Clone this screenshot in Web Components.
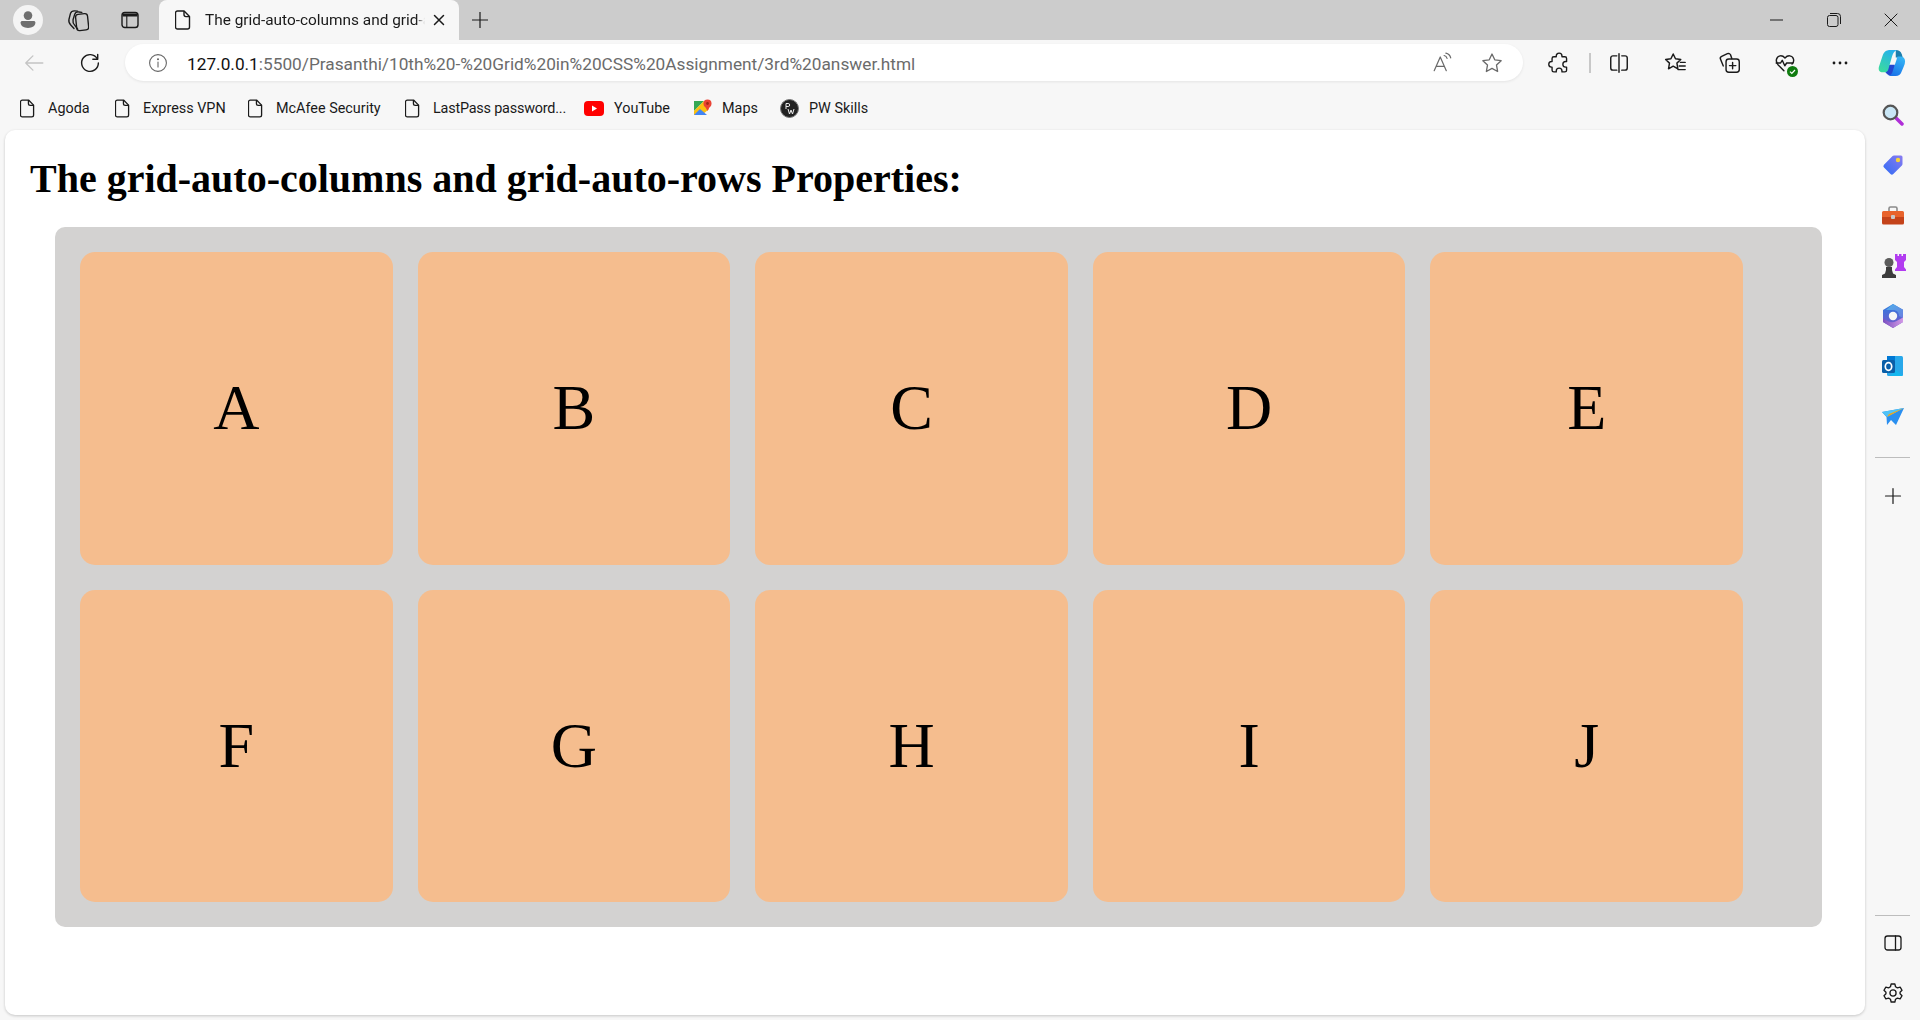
<!DOCTYPE html>
<html lang="en">
<head>
<meta charset="utf-8">
<title>The grid-auto-columns and grid-auto-rows Properties</title>
<style>
  html, body { margin: 0; height: 100%; background: #f7f7f7; overflow: hidden; }
  body { font-family: Roboto, "Liberation Sans", sans-serif; }
</style>
</head>
<body>
<browser-window>
  <browser-tabstrip slot="tabs" title-text="The grid-auto-columns and grid-auto-rows Properties"></browser-tabstrip>
  <browser-toolbar slot="toolbar"></browser-toolbar>
  <bookmark-bar slot="bookmarks"></bookmark-bar>
  <side-rail slot="rail"></side-rail>
  <page-card>
    <h1 style="font:bold 40px/46px 'Liberation Serif',serif;margin:0 0 0 25px;padding-top:16px;color:#000">The grid-auto-columns and grid-auto-rows Properties:</h1>
    <grid-demo>
      <grid-cell>A</grid-cell>
      <grid-cell>B</grid-cell>
      <grid-cell>C</grid-cell>
      <grid-cell>D</grid-cell>
      <grid-cell>E</grid-cell>
      <grid-cell>F</grid-cell>
      <grid-cell>G</grid-cell>
      <grid-cell>H</grid-cell>
      <grid-cell>I</grid-cell>
      <grid-cell>J</grid-cell>
    </grid-demo>
  </page-card>
</browser-window>

<script>
const stroke = (inner, size = 20, sw = 1.4) =>
  `<svg width="${size}" height="${size}" viewBox="0 0 20 20" fill="none" stroke="currentColor" stroke-width="${sw}" stroke-linecap="round" stroke-linejoin="round">${inner}</svg>`

const docIcon = `<svg width="16" height="20" viewBox="0 0 16 20" fill="none" stroke="#1a1a1a" stroke-width="1.4" stroke-linejoin="round"><path d="M2.5 1h6.6L14.5 6.4V17a2 2 0 0 1-2 2h-10a2 2 0 0 1-2-2V3a2 2 0 0 1 2-2z"/><path d="M9 1v3.6a2 2 0 0 0 2 2h3.5"/></svg>`

class BrowserWindow extends HTMLElement {
  constructor() {
    super()
    this.attachShadow({ mode: 'open' })
    this.shadowRoot.innerHTML = `
    <style>
      :host { display: flex; flex-direction: column; height: 1020px; width: 1920px; }
      .body { flex: 1; display: flex; min-height: 0; }
      .left { flex: 1; display: flex; flex-direction: column; min-width: 0; }
    </style>
    <slot name="tabs"></slot>
    <slot name="toolbar"></slot>
    <div class="body">
      <div class="left">
        <slot name="bookmarks"></slot>
        <slot></slot>
      </div>
      <slot name="rail"></slot>
    </div>`
  }
}

class BrowserTabstrip extends HTMLElement {
  constructor() {
    super()
    this.attachShadow({ mode: 'open' })
    this.shadowRoot.innerHTML = `
    <style>
      :host { display: flex; align-items: center; height: 40px; background: #cccccc; color: #1a1a1a; flex: none; }
      .avatar { width: 30px; height: 30px; border-radius: 50%; background: #f4f4f4; margin-left: 13px; display: flex; align-items: center; justify-content: center; }
      .btn { display: flex; align-items: center; justify-content: center; width: 24px; height: 24px; }
      .tab { width: 300px; height: 40px; margin-left: 17px; box-sizing: border-box; background: #f7f7f7; border-radius: 8px 8px 0 0; display: flex; align-items: center; padding: 0 14px 0 16px; }
      .title { width: 220px; margin-left: 14px; overflow: hidden; white-space: nowrap; font-size: 15.4px; color: #1a1a1a;
        -webkit-mask-image: linear-gradient(90deg, #000 96%, transparent); mask-image: linear-gradient(90deg, #000 96%, transparent); }
      .close { margin-left: auto; display: flex; }
      .plus { margin-left: 9px; }
      .win { margin-left: auto; display: flex; padding-right: 17px; gap: 33px; }
    </style>
    <div class="avatar"><svg width="20" height="20" viewBox="0 0 20 20" fill="#6f6f6f"><circle cx="10" cy="5.6" r="4.3"/><path d="M2.6 12.6c0-.9.8-1.6 1.7-1.6h11.4c.9 0 1.7.7 1.7 1.6 0 3.4-3 5.4-7.4 5.4s-7.4-2-7.4-5.4z"/></svg></div>
    <div class="btn" style="margin-left:22px">${stroke('<rect x="9.3" y="5" width="10" height="13.6" rx="2.4" transform="rotate(-6 14 12)"/><path d="M10.5 2.6L8 2.4C6 2.300 5.100 3 4.500 4.700L3.300 9.500C2.900 11.500 3.400 12.800 4.800 14.200L7.500 17"/><path d="M14 3.700L11.500 3.300C9.500 3.100 8.500 3.900 8 5.500L6.700 9.800C6.300 11.700 6.900 13.100 8.200 14.500L10.500 17.500"/>', 24, 1.150)}</div>
    <div class="btn" style="margin-left:29px"><svg width="20" height="20" viewBox="0 0 20 20" fill="none" stroke="#1a1a1a" stroke-width="1.400"><rect x="2" y="2.500" width="16" height="15" rx="2.800"/><path d="M2.500 3.500h15V6.500h-15z" fill="#1a1a1a" stroke="none"/><path d="M6.800 6v11.500" stroke-width="1.100"/></svg></div>
    <div class="tab">
      ${docIcon}
      <div class="title">${this.getAttribute('title-text')}</div>
      <div class="close"><svg width="12" height="12" viewBox="0 0 12 12" stroke="#1a1a1a" stroke-width="1.5" stroke-linecap="round"><path d="M1.5 1.5l9 9M10.5 1.5l-9 9"/></svg></div>
    </div>
    <div class="btn plus"><svg width="18" height="18" viewBox="0 0 18 18" stroke="#1a1a1a" stroke-width="1.2"><path d="M9 1v16M1 9h16"/></svg></div>
    <div class="win">
      <div class="btn"><svg width="14" height="14" viewBox="0 0 14 14" stroke="#1a1a1a" stroke-width="1"><path d="M0 7h13"/></svg></div>
      <div class="btn"><svg width="14" height="14" viewBox="0 0 14 14" fill="none" stroke="#1a1a1a" stroke-width="1"><rect x=".5" y="2.5" width="10.5" height="11" rx="2"/><path d="M3 .5h7.5a3 3 0 0 1 3 3V11"/></svg></div>
      <div class="btn"><svg width="14" height="14" viewBox="0 0 14 14" stroke="#1a1a1a" stroke-width="1"><path d="M.7.7l12.6 12.6M13.3.7L.7 13.3"/></svg></div>
    </div>`
  }
}

class BrowserToolbar extends HTMLElement {
  constructor() {
    super()
    this.attachShadow({ mode: 'open' })
    this.shadowRoot.innerHTML = `
    <style>
      :host { display: flex; align-items: center; height: 45px; background: #f7f7f7; color: #1a1a1a; flex: none; }
      .btn { display: flex; align-items: center; justify-content: center; width: 28px; height: 28px; flex: none; }
      .back { color: #c4c4c4; margin-left: 20px; }
      .reload { margin-left: 28px; }
      .address { width: 1398px; height: 37px; margin-left: 21px; box-sizing: border-box; background: #fff; border-radius: 19px; display: flex; align-items: center; padding: 0 17px 0 21px; box-shadow: 0 1px 3px rgba(0,0,0,.08); flex: none; }
      .url { margin-left: 17px; padding-top: 2px; font-size: 17.25px; white-space: nowrap; color: #6b6b6b; flex: 1; }
      .url b { font-weight: 400; color: #111; }
      .tools { display: flex; align-items: center; margin-left: 22px; }
      .sep { width: 1.5px; height: 20px; background: #c8c8c8; margin: 0 14px 0 16px; }
    </style>
    <div class="btn back">${stroke('<path d="M18 10H2.5M9 3.5L2.5 10 9 16.5"/>', 22, 1.2)}</div>
    <div class="btn reload">${stroke('<path d="M16.6 6.2A7.6 7.6 0 1 0 17.6 10"/><path d="M17 2.2v4.4h-4.4"/>', 22, 1.3)}</div>
    <div class="address">
      <div class="btn" style="width:24px;color:#666">${stroke('<circle cx="10" cy="10" r="8.4"/><path d="M10 9v5"/><circle cx="10" cy="6.2" r=".5"/>', 20, 1.1)}</div>
      <div class="url"><b>127.0.0.1</b>:5500/Prasanthi/10th%20-%20Grid%20in%20CSS%20Assignment/3rd%20answer.html</div>
      <div class="btn" style="color:#6a6a6a">${stroke('<path d="M2 17L7.5 4.5 13 17M4 13h7"/><path d="M11 3.2c1.3.3 2.3 1.3 2.7 2.6M12.6 1c2.2.5 3.9 2.2 4.4 4.4"/>', 22, 1.1)}</div>
      <div class="btn" style="margin-left:21px;color:#6a6a6a">${stroke('<path d="M10 1.8l2.5 5.3 5.8.8-4.2 4 1 5.8-5.1-2.8-5.1 2.8 1-5.8-4.2-4 5.8-.8z"/>', 22, 1.2)}</div>
    </div>
    <div class="tools">
      <div class="btn">${stroke('<path d="M7.500 4.300V3.600a2.600 2.600 0 0 1 5.200 0v.7h2.600c.9 0 1.600.7 1.600 1.600v2.700h-.8a2.600 2.600 0 0 0 0 5.200h.8v2.700c0 .9-.7 1.600-1.600 1.600h-2.600v-.8a2.600 2.600 0 0 0-5.200 0v.8H5.300c-.9 0-1.600-.7-1.600-1.600v-2.700h-.4a2.600 2.600 0 0 1 0-5.200h.4V5.900c0-.9.7-1.600 1.600-1.600z"/>', 22, 1.250)}</div>
      <div class="sep"></div>
      <div class="btn">${stroke('<path d="M8 3.500H4.500a2 2 0 0 0-2 2v9a2 2 0 0 0 2 2H8M12.500 3.500h3a2 2 0 0 1 2 2v9a2 2 0 0 1-2 2h-3M10 1.500v17"/>', 22, 1.3)}</div>
      <div class="btn" style="margin-left:28px">${stroke('<path d="M8.500 2.500l1.900 4 4.400.6-3.200 3 .8 4.700-3.900-2.200-3.900 2.200.8-4.700-3.200-3 4.400-.6z"/><path d="M14.500 9.500h4M13.500 12.500h5M12.500 15.500h6"/>', 24, 1.200)}</div>
      <div class="btn" style="margin-left:27px">${stroke('<rect x="7" y="7" width="11.500" height="11.500" rx="2.400"/><path d="M12.700 10v5.500M10 12.700h5.500"/><path d="M4.600 13L2.200 7.200a2 2 0 0 1 1-2.600l5-2.300a2 2 0 0 1 2.700 1L12 6.500"/>', 23, 1.250)}</div>
      <div class="btn" style="margin-left:27px;position:relative">${stroke('<path d="M9 17L3.600 11.500C1 8.500 2 4 5.600 3.500c1.800-.2 3.200.6 4.400 2 1.200-1.400 2.600-2.200 4.400-2 3.600.5 4.600 5 2 7.500"/><path d="M2 10h4l1.500-2.500 2.300 5 1.700-2.500H17"/>', 22, 1.3)}
        <svg style="position:absolute;right:1px;bottom:0" width="11" height="11" viewBox="0 0 11 11"><circle cx="5.5" cy="5.5" r="5.5" fill="#107c10"/><path d="M3 5.700l1.800 1.800L8 4" fill="none" stroke="#fff" stroke-width="1.2"/></svg></div>
      <div class="btn" style="margin-left:27px"><svg width="16" height="4" viewBox="0 0 16 4" fill="#1a1a1a"><circle cx="2" cy="2" r="1.4"/><circle cx="8" cy="2" r="1.4"/><circle cx="14" cy="2" r="1.4"/></svg></div>
      <div class="btn" style="margin-left:24px"><svg width="30" height="28" viewBox="0 0 30 28">
        <defs>
          <linearGradient id="cpl" x1="0.7" y1="0" x2="0.2" y2="1"><stop offset="0" stop-color="#25b0ee"/><stop offset="1" stop-color="#3bdc9c"/></linearGradient>
          <linearGradient id="cpr" x1="0.7" y1="0" x2="0.3" y2="1"><stop offset="0" stop-color="#35b6f5"/><stop offset="1" stop-color="#1a72e8"/></linearGradient>
        </defs>
        <path d="M18 16h-8l-2 8c2 3 5 4 8 4h3z" fill="#2447d0"/>
        <path d="M19 0c3 0 5.500 1.500 6.500 4.500L26.500 8H19z" fill="#1c7fae"/>
        <path d="M9 1c1-.8 2.500-1 4-1h7c-3 1.500-4 4-5 7l-4 14c-.5 2-2 3-4 3H5c-3 0-5-2-4-6L5 6c.7-2.300 2-4 4-5z" fill="url(#cpl)"/>
        <path d="M21 7h3c3 0 5 2 5 5 0 2-.5 4-1.500 6L25 24c-.8 2.500-3 4-6 4h-8c3-.8 4.500-3.500 5-6l4-12c.3-1.500.5-2.300 1-3z" fill="url(#cpr)"/>
      </svg></div>
    </div>`
  }
}

class BookmarkBar extends HTMLElement {
  constructor() {
    super()
    this.attachShadow({ mode: 'open' })
    const tiny = docIcon.replace('width="16" height="20"', 'width="15" height="19"')
    const items = [
      ['Agoda', tiny, 13, 24, 43],
      ['Express VPN', tiny, 13, 24, 81],
      ['McAfee Security', tiny, 13, 22, 107],
      ['LastPass password...', tiny, 13, 20, 131],
      ['YouTube', `<svg width="20" height="15" viewBox="0 0 20 15"><rect width="20" height="15" rx="4" fill="#f00"/><path d="M8 4.500l5 3-5 3z" fill="#fff"/></svg>`, 10, 23, 57],
      ['Maps', `<svg width="18" height="18" viewBox="0 0 18 18"><path d="M0 2h10L0 12z" fill="#34a853"/><path d="M0 12L10 2l5 8-7 6H0z" fill="#fbbc04" opacity=".95"/><path d="M0 16l6-6 7 6z" fill="#4285f4"/><circle cx="13.500" cy="4.500" r="4" fill="#ea4335"/><path d="M10.500 6.500l3 5.500 3-5.500z" fill="#ea4335"/><circle cx="13.500" cy="4.500" r="1.400" fill="#a52714"/></svg>`, 10, 22, 36],
      ['PW Skills', `<svg width="19" height="19" viewBox="0 0 19 19"><circle cx="9.500" cy="9.500" r="9" fill="#222" stroke="#777" stroke-width="1"/><path d="M6 4.500v5.500M6 4.500h2.200a1.500 1.500 0 0 1 0 3H6M8 10l1.500 5 1.500-4 1.500 4 1.500-5" fill="none" stroke="#eee" stroke-width="1"/></svg>`, 10, 0, 59]
    ]
    this.shadowRoot.innerHTML = `
    <style>
      :host { display: flex; align-items: center; height: 45px; flex: none; padding-left: 20px; box-sizing: border-box; padding-top: 1px; }
      .item { display: flex; align-items: center; font-size: 14.4px; color: #1a1a1a; white-space: nowrap; }
      .item span { display: block; }
      .tight { letter-spacing: -.2px; }
    </style>
    ${items.map(([label, icon, gap, after, w]) => `<div class="item" style="gap:${gap}px;margin-right:${after}px">${icon}<span style="width:${w}px" class="${w === 131 ? 'tight' : ''}">${label}</span></div>`).join('')}`
  }
}

class SideRail extends HTMLElement {
  constructor() {
    super()
    this.attachShadow({ mode: 'open' })
    this.shadowRoot.innerHTML = `
    <style>
      :host { display: flex; flex-direction: column; align-items: center; width: 55px; flex: none; box-sizing: border-box; padding: 17px 0 14px; color: #1a1a1a; }
      .ico { width: 26px; height: 26px; display: flex; align-items: center; justify-content: center; margin-bottom: 24.300px; flex: none; }
      hr { width: 35px; border: 0; border-top: 1px solid #bdbdbd; margin: 0; flex: none; }
      .spacer { flex: 1; }
    </style>
    <div class="ico"><svg width="22" height="22" viewBox="0 0 22 22"><path d="M13 13l7 7" stroke="#b02fd8" stroke-width="3.500" stroke-linecap="round"/><circle cx="8.500" cy="8.500" r="6.800" fill="#c9e6f5" stroke="#555" stroke-width="2.200"/></svg></div>
    <div class="ico"><svg width="22" height="22" viewBox="0 0 22 22"><defs><linearGradient id="tg" x1="0" y1="1" x2="1" y2="0"><stop offset="0" stop-color="#2f6cf5"/><stop offset="1" stop-color="#8a7bf0"/></linearGradient></defs><path d="M12 1.500h7a1.500 1.500 0 0 1 1.500 1.500v7a2 2 0 0 1-.6 1.400L11.300 20a2 2 0 0 1-2.800 0L2 13.500a2 2 0 0 1 0-2.800L10.600 2a2 2 0 0 1 1.400-.5z" fill="url(#tg)"/><circle cx="16" cy="6" r="2.200" fill="#f6d33c"/></svg></div>
    <div class="ico"><svg width="24" height="22" viewBox="0 0 24 22"><path d="M8 6V3.500A1.500 1.500 0 0 1 9.500 2h5A1.500 1.500 0 0 1 16 3.500V6" fill="none" stroke="#8a8a8a" stroke-width="1.600"/><path d="M1 7.500A1.500 1.500 0 0 1 2.500 6h19A1.500 1.500 0 0 1 23 7.500V12H1z" fill="#e8632c"/><path d="M1 12h22v6a1.500 1.500 0 0 1-1.500 1.500h-19A1.500 1.500 0 0 1 1 18z" fill="#c4431a"/><rect x="10" y="10" width="4" height="4" rx="1" fill="#c9c9c9"/></svg></div>
    <div class="ico"><svg width="26" height="26" viewBox="0 0 26 26"><path d="M15 1h2.500v2H19V1h2.500v2H23V1h3v6l-2 2v5l2 2.500V18H15v-1.500l2-2.500V9l-2-2z" fill="#b23cf0"/><circle cx="9" cy="9.500" r="4.500" fill="#5c5c5c"/><path d="M6 14h6v3l1 3.500 3 1.500v3H2v-3l3-1.500 1-3.500z" fill="#3c3c3c"/></svg></div>
    <div class="ico"><svg width="24" height="26" viewBox="0 0 24 26">
      <defs>
        <linearGradient id="m3a" x1="0" y1="0" x2="0" y2="1"><stop offset="0" stop-color="#2b7de0"/><stop offset="1" stop-color="#7d54c8"/></linearGradient>
        <linearGradient id="m3b" x1="0" y1="0" x2="1" y2="1"><stop offset="0" stop-color="#4fb0ea"/><stop offset="1" stop-color="#6a7fe0"/></linearGradient>
        <linearGradient id="m3c" x1="0" y1="0" x2="1" y2="0"><stop offset="0" stop-color="#7a4fc0"/><stop offset="1" stop-color="#d49ae6"/></linearGradient>
      </defs>
      <path d="M12 1l10 5.800V19l-10 6-10-6V7z" fill="url(#m3a)"/>
      <path d="M12 1l10 5.800V15l-4-2c0-4-2.500-6-6-6H5z" fill="url(#m3b)"/>
      <path d="M2 15.500l5.500 3c2.500 1.300 5.500 1 8-.5l6.500-3.500V19l-10 6-10-6z" fill="url(#m3c)"/>
      <circle cx="12" cy="13" r="4.200" fill="#f7f7f7"/>
    </svg></div>
    <div class="ico"><svg width="24" height="22" viewBox="0 0 24 22"><rect x="6" y="1" width="16" height="20" rx="1.500" fill="#28a8ea"/><rect x="6" y="1" width="8" height="7" fill="#0078d4"/><path d="M9 21h13l-7-6z" fill="#14b7ef"/><rect x="1" y="5" width="13" height="13" rx="1.500" fill="#0a5fa8"/><ellipse cx="7.500" cy="11.500" rx="3.200" ry="3.800" fill="none" stroke="#fff" stroke-width="1.700"/></svg></div>
    <div class="ico" style="margin-bottom:27px"><svg width="24" height="20" viewBox="0 0 24 20"><path d="M1 5l22-4-8 17-5-5-4 5-.5-8z" fill="#2a8ff0"/><path d="M1 5l22-4L6 10z" fill="#4fc3f7"/><path d="M6 10L23 1 8 7z" fill="#f2a516"/></svg></div>
    <hr>
    <div class="ico" style="margin:25px 0 0">${stroke('<path d="M10 2.500v15M2.500 10h15"/>', 20, 1.200)}</div>
    <div class="spacer"></div>
    <hr>
    <div class="ico" style="margin:14px 0 24px">${stroke('<rect x="2" y="3" width="16" height="14" rx="2.500"/><path d="M12.500 3v14"/>', 20, 1.300)}</div>
    <div class="ico" style="margin:0">${stroke('<circle cx="10" cy="10" r="2.800"/><path d="M8.300 1.800h3.400l.6 2.500 1.700 1 2.500-.7 1.700 2.900-1.800 1.800v1.400l1.800 1.800-1.700 2.900-2.500-.7-1.700 1-.6 2.500H8.300l-.6-2.500-1.700-1-2.500.7-1.700-2.900 1.800-1.800V9.300L1.800 7.500l1.700-2.900 2.500.7 1.700-1z"/>', 22, 1.200)}</div>`
  }
}

class PageCard extends HTMLElement {
  constructor() {
    super()
    this.attachShadow({ mode: 'open' })
    this.shadowRoot.innerHTML = `
    <style>
      :host { display: block; flex: 1; min-height: 0; margin: 0 0 5px 5px; background: #fff; border-radius: 10px; box-shadow: 0 1px 3px rgba(0,0,0,.2); box-sizing: border-box; overflow: hidden; }
      .inner { padding-top: 10px; }
    </style>
    <div class="inner"><slot></slot></div>`
  }
}

class GridDemo extends HTMLElement {
  constructor() {
    super()
    this.attachShadow({ mode: 'open' })
    this.shadowRoot.innerHTML = `
    <style>
      :host { display: grid; grid-template-columns: repeat(5, 312.6px); grid-auto-rows: 312.5px; gap: 25px; padding: 25px; width: 1767px; margin: 25px 0 0 50px; box-sizing: border-box; background: #d3d2d1; border-radius: 10px; }
    </style>
    <slot></slot>`
  }
}

class GridCell extends HTMLElement {
  constructor() {
    super()
    this.attachShadow({ mode: 'open' })
    this.shadowRoot.innerHTML = `
    <style>
      :host { display: flex; align-items: center; justify-content: center; background: #f5bd8e; border-radius: 15px; font: 64px "Liberation Serif", serif; color: #000; }
    </style>
    <slot></slot>`
  }
}

customElements.define('browser-window', BrowserWindow)
customElements.define('browser-tabstrip', BrowserTabstrip)
customElements.define('browser-toolbar', BrowserToolbar)
customElements.define('bookmark-bar', BookmarkBar)
customElements.define('side-rail', SideRail)
customElements.define('page-card', PageCard)
customElements.define('grid-demo', GridDemo)
customElements.define('grid-cell', GridCell)
</script>
</body>
</html>
